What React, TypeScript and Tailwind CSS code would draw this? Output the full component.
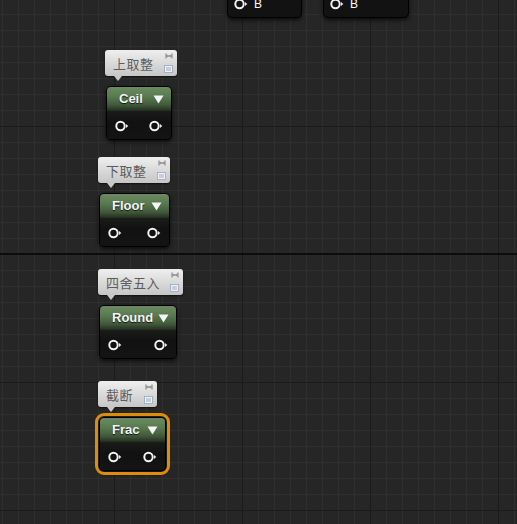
import React from 'react';

// UE-style material graph: four math nodes with comment bubbles

function Pin() {
  return (
    <svg width="14" height="12" viewBox="0 0 14 12" className="shrink-0">
      <circle cx="5.5" cy="6" r="4.2" fill="none" stroke="#f2f2f2" strokeWidth="2" />
      <path d="M11 4 L13.3 6 L11 8 Z" fill="#e8e8e8" />
    </svg>
  );
}

function BubbleIcons() {
  return (
    <div className="flex flex-col items-center justify-between h-full py-[3px]">
      <svg width="8" height="6" viewBox="0 0 8 6">
        <path d="M1 0.5 V5.5 M7 0.5 V5.5 M1 3 H7" stroke="#8a8a8a" strokeWidth="1.2" fill="none" />
        <path d="M2.2 1.5 L4 3 L2.2 4.5 Z M5.8 1.5 L4 3 L5.8 4.5 Z" fill="#8a8a8a" />
      </svg>
      <svg width="9" height="8" viewBox="0 0 9 8">
        <rect x="0.5" y="0.5" width="8" height="7" fill="#eef2f8" stroke="#9aa6b8" strokeWidth="0.8" />
        <path d="M2 3 H7 M2 5 H7" stroke="#8c9ab0" strokeWidth="0.8" />
      </svg>
    </div>
  );
}

interface NodeProps {
  x: number;
  y: number;
  w: number;
  title: string;
  comment: string;
  commentW: number;
  selected?: boolean;
}

function MathNode({ x, y, w, title, comment, commentW, selected }: NodeProps) {
  return (
    <div className="absolute" style={{ left: x, top: y }}>
      {/* comment bubble */}
      <div
        className="relative h-[26px] -ml-px rounded-[3px] bg-[linear-gradient(to_bottom,#efefef,#d6d6d6_60%,#c6c6c6)] flex items-center justify-between pl-[8px] pr-[4px] shadow-[0_1px_2px_rgba(0,0,0,0.6)]"
        style={{ width: commentW }}
      >
        <span className="text-[13px] leading-none text-[#5c5c5c] font-['Noto_Sans_CJK_SC',sans-serif] tracking-[0.5px]">
          {comment}
        </span>
        <BubbleIcons />
        <div className="absolute left-[9px] -bottom-[5px] w-0 h-0 border-l-[4px] border-r-[4px] border-t-[5px] border-l-transparent border-r-transparent border-t-[#c8c8c8]" />
      </div>
      {/* node */}
      <div
        className={`mt-[10px] h-[54px] rounded-[5px] bg-[#121212] border border-black shadow-[0_2px_4px_rgba(0,0,0,0.7)] flex flex-col overflow-hidden ${
          selected ? 'outline-solid outline-[3px] outline-[#de8c0c] outline-offset-[1px]' : ''
        }`}
        style={{ width: w }}
      >
        <div className="h-[24px] shrink-0 bg-[linear-gradient(to_bottom,#6d8a63,#587a4f_40%,#41593b_75%,#222c20)] flex items-center justify-between pl-[12px] pr-[7px]">
          <span className="text-[13px] font-bold text-[#f4f4f4] font-['Liberation_Sans',Arial,sans-serif] [text-shadow:0_1px_1px_rgba(0,0,0,0.8)]">
            {title}
          </span>
          <svg width="11" height="9" viewBox="0 0 11 9">
            <path d="M0.5 0.5 H10.5 L5.5 8.5 Z" fill="#f4f4f4" />
          </svg>
        </div>
        <div className="flex-1 bg-[linear-gradient(to_bottom,#1a1c19,#111111_40%,#141414)] flex items-center justify-between pl-[8px] pr-[8px] pt-[1px]">
          <Pin />
          <Pin />
        </div>
      </div>
    </div>
  );
}

function TopNode({ x, w }: { x: number; w: number }) {
  return (
    <div
      className="absolute top-[-30px] h-[48px] rounded-[5px] bg-[#121212] border border-black shadow-[0_2px_4px_rgba(0,0,0,0.7)] flex items-end pb-[7px] pl-[6px] gap-[6px]"
      style={{ left: x, width: w }}
    >
      <Pin />
      <span className="text-[12px] leading-[9px] mb-[1px] text-white font-['Liberation_Sans',Arial,sans-serif]">B</span>
    </div>
  );
}

export default function App() {
  return (
    <div
      className="relative w-[517px] h-[524px] overflow-hidden bg-[#262626]
        [background-image:linear-gradient(to_bottom,transparent_253px,#0c0c0c_253px,#0c0c0c_255px,transparent_255px),linear-gradient(to_right,#1b1b1b_1px,transparent_1px),linear-gradient(to_bottom,#1b1b1b_1px,transparent_1px),linear-gradient(to_right,#2f2f2f_1px,transparent_1px),linear-gradient(to_bottom,#2f2f2f_1px,transparent_1px)]
        [background-size:100%_100%,128px_100%,100%_128px,16px_100%,100%_16px]
        [background-position:0_0,114px_0,0_126px,2px_0,0_14px]"
    >
      <TopNode x={227} w={75} />
      <TopNode x={323} w={86} />

      <MathNode x={106} y={50} w={66} title="Ceil" comment="上取整" commentW={72} />
      <MathNode x={99} y={157} w={71} title="Floor" comment="下取整" commentW={72} />
      <MathNode x={99} y={269} w={78} title="Round" comment="四舍五入" commentW={85} />
      <MathNode x={99} y={381} w={67} title="Frac" comment="截断" commentW={59} selected />
    </div>
  );
}
